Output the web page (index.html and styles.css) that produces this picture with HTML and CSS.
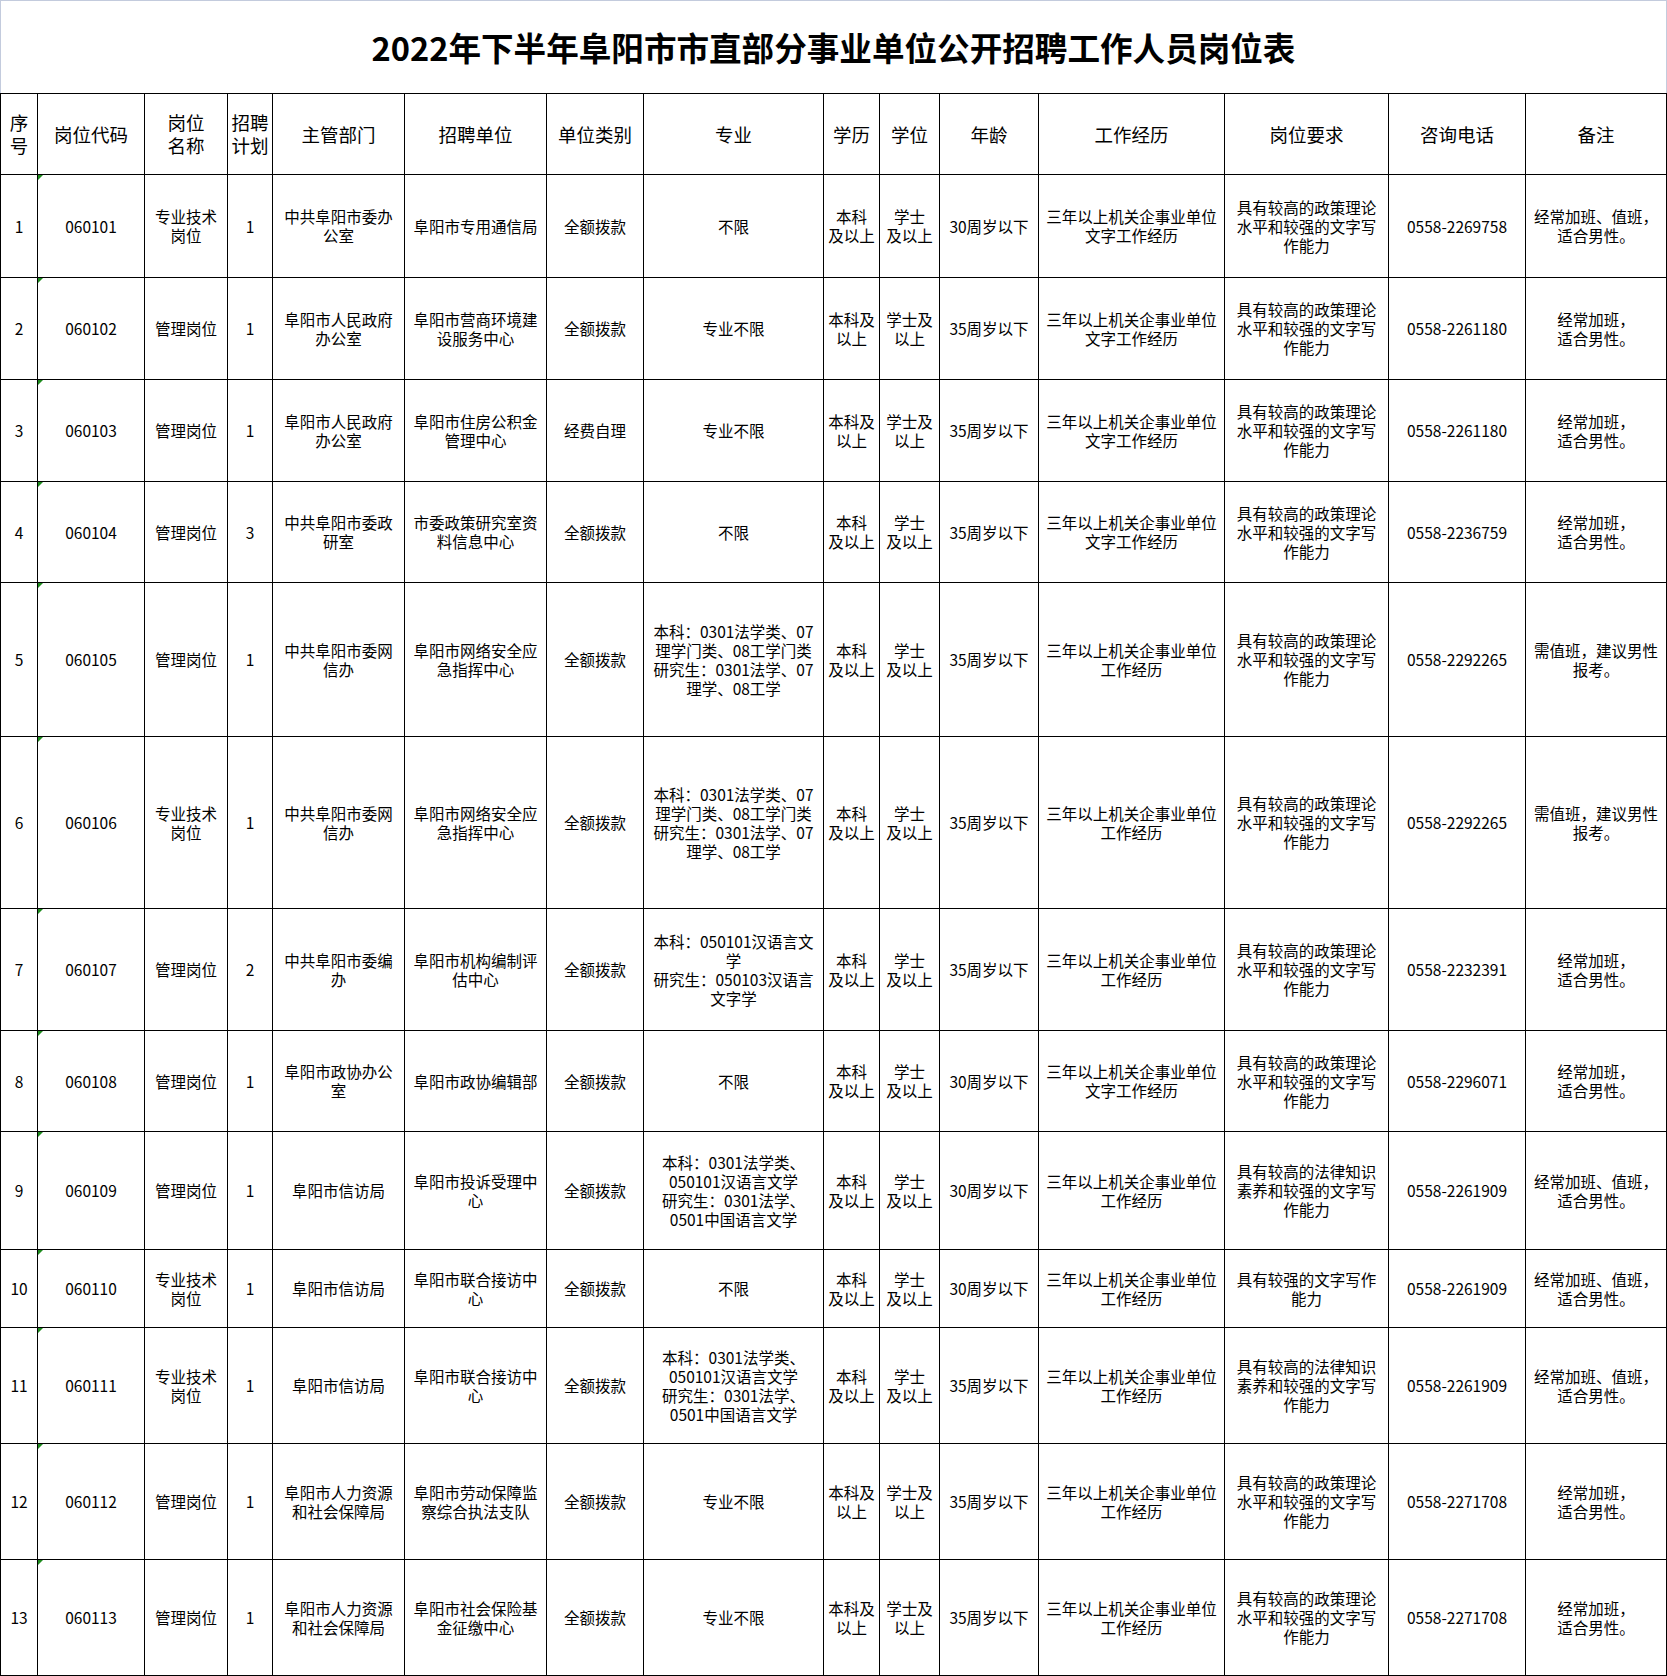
FILE: index.html
```html
<!DOCTYPE html>
<html lang="zh-CN">
<head>
<meta charset="utf-8">
<title>2022年下半年阜阳市市直部分事业单位公开招聘工作人员岗位表</title>
<link rel="stylesheet" href="styles.css">
</head>
<body>
<div class="sheet">
  <div class="title-bar"><h1 class="title">2022年下半年阜阳市市直部分事业单位公开招聘工作人员岗位表</h1></div>
  <table class="grid">
    <colgroup>
      <col class="c1"><col class="c2"><col class="c3"><col class="c4"><col class="c5"><col class="c6"><col class="c7"><col class="c8"><col class="c9"><col class="c10"><col class="c11"><col class="c12"><col class="c13"><col class="c14"><col class="c15">
    </colgroup>
    <thead>
      <tr class="hrow">
        <th>序<br>号</th><th>岗位代码</th><th>岗位<br>名称</th><th>招聘<br>计划</th><th>主管部门</th><th>招聘单位</th><th>单位类别</th><th>专业</th><th>学历</th><th>学位</th><th>年龄</th><th>工作经历</th><th>岗位要求</th><th>咨询电话</th><th>备注</th>
      </tr>
    </thead>
    <tbody>
      <tr class="h103">
        <td>1</td><td class="code">060101</td><td>专业技术<br>岗位</td><td>1</td><td>中共阜阳市委办<br>公室</td><td>阜阳市专用通信局</td><td>全额拨款</td><td>不限</td><td>本科<br>及以上</td><td>学士<br>及以上</td><td>30周岁以下</td><td>三年以上机关企事业单位<br>文字工作经历</td><td>具有较高的政策理论<br>水平和较强的文字写<br>作能力</td><td>0558-2269758</td><td>经常加班、值班，<br>适合男性。</td>
      </tr>
      <tr class="h102">
        <td>2</td><td class="code">060102</td><td>管理岗位</td><td>1</td><td>阜阳市人民政府<br>办公室</td><td>阜阳市营商环境建<br>设服务中心</td><td>全额拨款</td><td>专业不限</td><td>本科及<br>以上</td><td>学士及<br>以上</td><td>35周岁以下</td><td>三年以上机关企事业单位<br>文字工作经历</td><td>具有较高的政策理论<br>水平和较强的文字写<br>作能力</td><td>0558-2261180</td><td>经常加班，<br>适合男性。</td>
      </tr>
      <tr class="h102">
        <td>3</td><td class="code">060103</td><td>管理岗位</td><td>1</td><td>阜阳市人民政府<br>办公室</td><td>阜阳市住房公积金<br>管理中心</td><td>经费自理</td><td>专业不限</td><td>本科及<br>以上</td><td>学士及<br>以上</td><td>35周岁以下</td><td>三年以上机关企事业单位<br>文字工作经历</td><td>具有较高的政策理论<br>水平和较强的文字写<br>作能力</td><td>0558-2261180</td><td>经常加班，<br>适合男性。</td>
      </tr>
      <tr class="h101">
        <td>4</td><td class="code">060104</td><td>管理岗位</td><td>3</td><td>中共阜阳市委政<br>研室</td><td>市委政策研究室资<br>料信息中心</td><td>全额拨款</td><td>不限</td><td>本科<br>及以上</td><td>学士<br>及以上</td><td>35周岁以下</td><td>三年以上机关企事业单位<br>文字工作经历</td><td>具有较高的政策理论<br>水平和较强的文字写<br>作能力</td><td>0558-2236759</td><td>经常加班，<br>适合男性。</td>
      </tr>
      <tr class="h154">
        <td>5</td><td class="code">060105</td><td>管理岗位</td><td>1</td><td>中共阜阳市委网<br>信办</td><td>阜阳市网络安全应<br>急指挥中心</td><td>全额拨款</td><td>本科：0301法学类、07<br>理学门类、08工学门类<br>研究生：0301法学、07<br>理学、08工学</td><td>本科<br>及以上</td><td>学士<br>及以上</td><td>35周岁以下</td><td>三年以上机关企事业单位<br>工作经历</td><td>具有较高的政策理论<br>水平和较强的文字写<br>作能力</td><td>0558-2292265</td><td>需值班，建议男性<br>报考。</td>
      </tr>
      <tr class="h172">
        <td>6</td><td class="code">060106</td><td>专业技术<br>岗位</td><td>1</td><td>中共阜阳市委网<br>信办</td><td>阜阳市网络安全应<br>急指挥中心</td><td>全额拨款</td><td>本科：0301法学类、07<br>理学门类、08工学门类<br>研究生：0301法学、07<br>理学、08工学</td><td>本科<br>及以上</td><td>学士<br>及以上</td><td>35周岁以下</td><td>三年以上机关企事业单位<br>工作经历</td><td>具有较高的政策理论<br>水平和较强的文字写<br>作能力</td><td>0558-2292265</td><td>需值班，建议男性<br>报考。</td>
      </tr>
      <tr class="h122">
        <td>7</td><td class="code">060107</td><td>管理岗位</td><td>2</td><td>中共阜阳市委编<br>办</td><td>阜阳市机构编制评<br>估中心</td><td>全额拨款</td><td>本科：050101汉语言文<br>学<br>研究生：050103汉语言<br>文字学</td><td>本科<br>及以上</td><td>学士<br>及以上</td><td>35周岁以下</td><td>三年以上机关企事业单位<br>工作经历</td><td>具有较高的政策理论<br>水平和较强的文字写<br>作能力</td><td>0558-2232391</td><td>经常加班，<br>适合男性。</td>
      </tr>
      <tr class="h101">
        <td>8</td><td class="code">060108</td><td>管理岗位</td><td>1</td><td>阜阳市政协办公<br>室</td><td>阜阳市政协编辑部</td><td>全额拨款</td><td>不限</td><td>本科<br>及以上</td><td>学士<br>及以上</td><td>30周岁以下</td><td>三年以上机关企事业单位<br>文字工作经历</td><td>具有较高的政策理论<br>水平和较强的文字写<br>作能力</td><td>0558-2296071</td><td>经常加班，<br>适合男性。</td>
      </tr>
      <tr class="h118">
        <td>9</td><td class="code">060109</td><td>管理岗位</td><td>1</td><td>阜阳市信访局</td><td>阜阳市投诉受理中<br>心</td><td>全额拨款</td><td>本科：0301法学类、<br>050101汉语言文学<br>研究生：0301法学、<br>0501中国语言文学</td><td>本科<br>及以上</td><td>学士<br>及以上</td><td>30周岁以下</td><td>三年以上机关企事业单位<br>工作经历</td><td>具有较高的法律知识<br>素养和较强的文字写<br>作能力</td><td>0558-2261909</td><td>经常加班、值班，<br>适合男性。</td>
      </tr>
      <tr class="h78">
        <td>10</td><td class="code">060110</td><td>专业技术<br>岗位</td><td>1</td><td>阜阳市信访局</td><td>阜阳市联合接访中<br>心</td><td>全额拨款</td><td>不限</td><td>本科<br>及以上</td><td>学士<br>及以上</td><td>30周岁以下</td><td>三年以上机关企事业单位<br>工作经历</td><td>具有较强的文字写作<br>能力</td><td>0558-2261909</td><td>经常加班、值班，<br>适合男性。</td>
      </tr>
      <tr class="h116">
        <td>11</td><td class="code">060111</td><td>专业技术<br>岗位</td><td>1</td><td>阜阳市信访局</td><td>阜阳市联合接访中<br>心</td><td>全额拨款</td><td>本科：0301法学类、<br>050101汉语言文学<br>研究生：0301法学、<br>0501中国语言文学</td><td>本科<br>及以上</td><td>学士<br>及以上</td><td>35周岁以下</td><td>三年以上机关企事业单位<br>工作经历</td><td>具有较高的法律知识<br>素养和较强的文字写<br>作能力</td><td>0558-2261909</td><td>经常加班、值班，<br>适合男性。</td>
      </tr>
      <tr class="h116">
        <td>12</td><td class="code">060112</td><td>管理岗位</td><td>1</td><td>阜阳市人力资源<br>和社会保障局</td><td>阜阳市劳动保障监<br>察综合执法支队</td><td>全额拨款</td><td>专业不限</td><td>本科及<br>以上</td><td>学士及<br>以上</td><td>35周岁以下</td><td>三年以上机关企事业单位<br>工作经历</td><td>具有较高的政策理论<br>水平和较强的文字写<br>作能力</td><td>0558-2271708</td><td>经常加班，<br>适合男性。</td>
      </tr>
      <tr class="h116">
        <td>13</td><td class="code">060113</td><td>管理岗位</td><td>1</td><td>阜阳市人力资源<br>和社会保障局</td><td>阜阳市社会保险基<br>金征缴中心</td><td>全额拨款</td><td>专业不限</td><td>本科及<br>以上</td><td>学士及<br>以上</td><td>35周岁以下</td><td>三年以上机关企事业单位<br>工作经历</td><td>具有较高的政策理论<br>水平和较强的文字写<br>作能力</td><td>0558-2271708</td><td>经常加班，<br>适合男性。</td>
      </tr>
    </tbody>
  </table>
</div>
</body>
</html>
```

FILE: styles.css
```css
html, body {
  margin: 0;
  padding: 0;
  background: #ffffff;
}

body {
  font-family: "Noto Sans CJK SC", "Noto Sans", sans-serif;
  color: #000000;
  width: 1667px;
}

.sheet {
  width: 1667px;
}

.title-bar {
  box-sizing: border-box;
  height: 93px;
  border: 1px solid #c3cbdd;
  border-bottom: none;
  display: flex;
  align-items: center;
  justify-content: center;
}

.title {
  margin: 0;
  font-size: 32.6px;
  font-weight: 700;
  line-height: 40px;
  letter-spacing: 0;
  padding-top: 0;
}

.grid {
  border-collapse: collapse;
  table-layout: fixed;
  width: 1667px;
}

.grid th,
.grid td {
  border: 1px solid #000000;
  padding: 0;
  text-align: center;
  vertical-align: middle;
  overflow: hidden;
  white-space: nowrap;
}

.grid th {
  font-weight: 400;
  font-size: 18.5px;
  line-height: 23px;
  height: 80px;
}

.grid td {
  font-size: 15.5px;
  line-height: 19px;
  font-weight: 400;
  letter-spacing: 0;
}

.grid td.code {
  position: relative;
}

.grid td.code::before {
  content: "";
  position: absolute;
  left: 0;
  top: 0;
  width: 0;
  height: 0;
  border-top: 5px solid #1e8c1e;
  border-right: 5px solid transparent;
}

.c1 { width: 37px; }
.c2 { width: 107px; }
.c3 { width: 83px; }
.c4 { width: 45px; }
.c5 { width: 132px; }
.c6 { width: 142px; }
.c7 { width: 97px; }
.c8 { width: 180px; }
.c9 { width: 56px; }
.c10 { width: 60px; }
.c11 { width: 99px; }
.c12 { width: 186px; }
.c13 { width: 164px; }
.c14 { width: 137px; }
.c15 { width: 141px; }

.h78 td { height: 77px; }
.h101 td { height: 100px; }
.h102 td { height: 101px; }
.h103 td { height: 102px; }
.h116 td { height: 115px; }
.h118 td { height: 117px; }
.h122 td { height: 121px; }
.h154 td { height: 153px; }
.h172 td { height: 171px; }
```
